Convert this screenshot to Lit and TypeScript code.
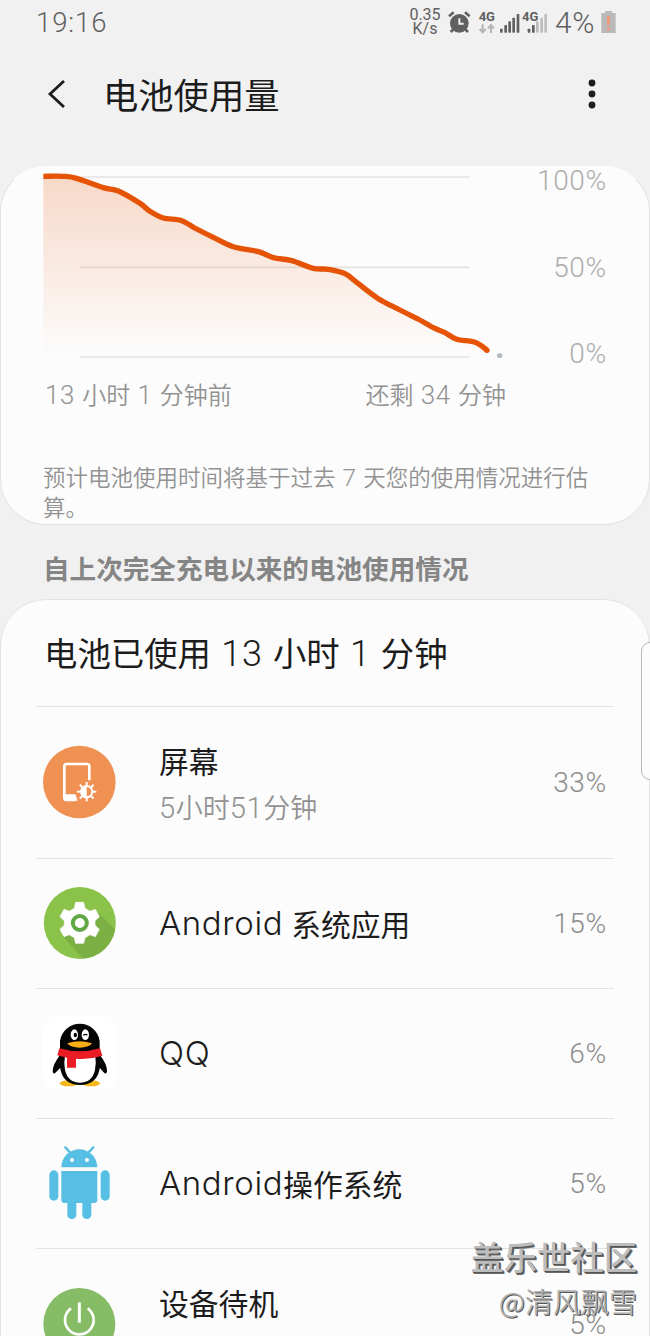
import { LitElement, html, css, svg } from "lit";
import { customElement } from "lit/decorators.js";

type Point = [number, number];

const LEVELS: Point[] = [
  [130, 79], [190, 79], [230, 85], [310, 113], [355, 123], [420, 160], [450, 184], [490, 204],
  [545, 212], [590, 237], [640, 262], [700, 290], [775, 305], [820, 323], [875, 332],
  [940, 355], [985, 358], [1035, 371], [1075, 401], [1135, 446], [1200, 480], [1265, 513],
  [1300, 533], [1335, 548], [1370, 568], [1425, 577], [1462, 601],
];

/** Smooth path through the points (Catmull-Rom converted to cubic segments). */
function smooth(p: Point[]): string {
  let d = `M${p[0][0]} ${p[0][1]}`;
  for (let i = 0; i < p.length - 1; i++) {
    const a = p[Math.max(0, i - 1)], b = p[i], c = p[i + 1], e = p[Math.min(p.length - 1, i + 2)];
    d += `C${b[0] + (c[0] - a[0]) / 6} ${b[1] + (c[1] - a[1]) / 6} ${c[0] - (e[0] - b[0]) / 6} ${c[1] - (e[1] - b[1]) / 6} ${c[0]} ${c[1]}`;
  }
  return d;
}

const CURVE = smooth(LEVELS);

/** Sets numerals (with their spaces) apart from the Chinese text around them. */
const mixed = (text: string) =>
  text.split(/([ \d]+)/).filter(Boolean).map((t) => (/^[ \d]+$/.test(t) ? html`<span class="n">${t}</span>` : t));

const rays = (cx: number, cy: number, r1: number, r2: number) =>
  [0, 1, 2, 3, 4, 5, 6, 7].map((k) => {
    const a = (k * Math.PI) / 4;
    return svg`<line x1=${cx + r1 * Math.cos(a)} y1=${cy + r1 * Math.sin(a)} x2=${cx + r2 * Math.cos(a)} y2=${cy + r2 * Math.sin(a)}/>`;
  });

const screenIcon = html`<svg class="icon" viewBox="72 47 216 216">
  <circle cx="178" cy="155" r="109" fill="#ef9152"/>
  <path d="M208 150V108Q208 101 201 101H140Q133 101 133 108V202Q133 209 140 209H167" fill="none" stroke="#fff" stroke-width="8"/>
  <path d="M133 192H166L173 211H138Z" fill="#fff"/>
  <g stroke="#fff" stroke-width="6">${rays(200, 184, 19, 29)}</g>
  <circle cx="200" cy="184" r="17" fill="none" stroke="#fff" stroke-width="6"/>
  <path d="M200 167A17 17 0 0 0 200 201Z" fill="#fff"/>
</svg>`;

const gearIcon = html`<svg class="icon" viewBox="72 470 216 216">
  <defs><clipPath id="disc"><circle cx="179.500" cy="578" r="108"/></clipPath></defs>
  <circle cx="179.500" cy="578" r="108" fill="#8bc34a"/>
  <g clip-path="url(#disc)"><path d="M236 548L300 612V690H193L128 617Z" fill="#7cb045"/></g>
  <path d="M167 516H191L195 534Q203 538 210 543L226 537L238 559L225 571V585L238 597L226 619L210 613Q203 618 195 622L191 639H167L163 622Q155 618 148 613L132 619L120 597L133 585V571L120 559L132 537L148 543Q155 538 163 534Z" fill="#fff" stroke="#fff" stroke-width="2" stroke-linejoin="round"/>
  <circle cx="179.500" cy="578" r="21" fill="#fff" stroke="#5fa843" stroke-width="12"/>
</svg>`;

const qqIcon = html`<svg class="icon" viewBox="72 48 216 216">
  <rect x="68" y="46" width="222" height="218" rx="40" fill="#fff"/>
  <ellipse cx="146" cy="247" rx="27" ry="9" fill="#f5b81c"/>
  <ellipse cx="213" cy="247" rx="27" ry="9" fill="#f5b81c"/>
  <path d="M122 160Q98 190 98 212Q100 222 108 214L126 195ZM238 160Q262 190 261 212Q258 222 251 214L234 195Z" fill="#050505"/>
  <path d="M120 150V120A60 59 0 0 1 239 120V150Q246 180 238 208Q228 252 180 252Q132 252 122 208Q114 180 120 150Z" fill="#050505"/>
  <path d="M135 165H226Q229 187 225 207Q216 245 180 245Q144 245 135 207Q131 187 135 165Z" fill="#fff"/>
  <ellipse cx="163" cy="101" rx="11" ry="16" fill="#fff"/>
  <ellipse cx="196" cy="101" rx="11" ry="16" fill="#fff"/>
  <ellipse cx="166" cy="102" rx="5" ry="7" fill="#050505"/>
  <path d="M190 103Q196 97 202 103" fill="none" stroke="#050505" stroke-width="4"/>
  <path d="M142 127Q178 115 216 127Q206 140 179 140Q152 140 142 127Z" fill="#f8ae14"/>
  <path d="M118 142Q179 160 240 142L247 164Q206 177 168 173V200H141V170L112 163Z" fill="#eb1c23"/>
</svg>`;

const robotIcon = html`<svg class="icon" viewBox="72 441 216 216">
  <g fill="#57bfe3">
    <path d="M124 502A54 54 0 0 1 232 502Z"/>
    <path d="M124 513H232V600Q232 609 223 609H133Q124 609 124 600Z"/>
    <rect x="88" y="511" width="27" height="91" rx="13.500"/>
    <rect x="242" y="511" width="27" height="91" rx="13.500"/>
    <rect x="142" y="590" width="27" height="67" rx="13"/>
    <rect x="187" y="590" width="27" height="67" rx="13"/>
  </g>
  <path d="M136 442L150 457M220 442L206 457" stroke="#57bfe3" stroke-width="7" stroke-linecap="round"/>
  <circle cx="156" cy="480" r="6" fill="#fff"/><circle cx="201" cy="480" r="6" fill="#fff"/>
</svg>`;

const powerIcon = html`<svg class="icon" viewBox="132 172 216 216">
  <circle cx="238" cy="280" r="108" fill="#86bc66"/>
  <path d="M238 215V276" stroke="#fff" stroke-width="9"/>
  <path d="M213 233A43 43 0 1 0 263 233" fill="none" stroke="#fff" stroke-width="8"/>
</svg>`;

const ROWS = [
  { icon: screenIcon, latin: "", cjk: "屏幕", sub: "5小时51分钟", tall: true, pct: "33%" },
  { icon: gearIcon, latin: "Android", cjk: "系统应用", gap: true, pct: "15%" },
  { icon: qqIcon, latin: "QQ", cjk: "", pct: "6%" },
  { icon: robotIcon, latin: "Android", cjk: "操作系统", pct: "5%" },
  { icon: powerIcon, latin: "", cjk: "设备待机", tall: true, pct: "5%" },
];

@customElement("app-root")
export class AppRoot extends LitElement {
  static styles = css`
    :host {
      display: block; position: relative; width: 650px; height: 1336px; overflow: hidden;
      background: #f1f1f1; color: #1c1c1c; white-space: nowrap;
      font-family: "Noto Sans CJK SC", sans-serif; font-weight: 350;
    }
    * { box-sizing: border-box; }
    svg { display: block; overflow: visible; }
    .c { font-weight: 400; }
    .n { font-family: Roboto, sans-serif; font-weight: 300; font-size: 1.08em; letter-spacing: .02em; word-spacing: .02em; line-height: 1; white-space: pre-wrap; }
    .status { display: flex; height: 44px; align-items: center; padding-left: 36px; color: #606060; font-family: Roboto, sans-serif; font-weight: 300; }
    .clock { font-size: 27.5px; width: 371px; letter-spacing: .9px; }
    .speed { font-size: 16px; line-height: 14px; width: 36px; text-align: center; font-weight: 400; }
    .signals { width: 107px; height: 30px; margin-left: 2px; }
    .signals text { font: 700 39px Roboto, sans-serif; fill: #606060; }
    .level { font-size: 30px; width: 46px; margin-left: 3px; letter-spacing: .6px; }
    .header { display: flex; align-items: center; height: 122px; padding: 0 52px 22px 47px; }
    .title { flex: 1; margin: 0 0 0 37px; font-size: 35.3px; line-height: 50px; }
    .card { border: 1px solid #e3e3e3; background: #fcfcfc; border-radius: 46px; }
    .usage { height: 359px; border-top-color: #fcfcfc; }
    .graph { display: flex; height: 200px; }
    .plot { width: 516px; height: 200px; margin: -1px 0 0 -1px; }
    .scale { display: flex; flex-direction: column; justify-content: space-between; flex: 1; height: 207px; padding-right: 42px; text-align: right; color: #adadad; line-height: 34px; margin-top: -3px; }
    .scale, .pct { font-family: Roboto, sans-serif; font-weight: 300; font-size: 28px; letter-spacing: .7px; }
    .times { display: flex; justify-content: space-between; padding: 10px 143px 0 44px; line-height: 34px; height: 45px; font-size: 24px; color: #929292; }
    .note { padding: 50px 50px 0 42px; font-size: 22.5px; line-height: 29.5px; color: #929292; white-space: normal; word-break: break-all; }
    .section { height: 74px; padding: 25px 0 0 43px; font-size: 26.6px; line-height: 36px; color: #858585; font-weight: 700; }
    .list { height: 800px; padding: 0 35px; }
    .total { height: 107px; padding: 0 0 0 8px; line-height: 104px; font-size: 33.4px; border-bottom: 1px solid #e3e3e3; }
    .row { display: flex; align-items: center; height: 130px; border-bottom: 1px solid #e3e3e3; padding: 0 7px 0 8px; }
    .tall { height: 152px; }
    .icon { width: 72px; height: 72px; margin-bottom: 2px; }
    .info { flex: 1; margin-left: 43px; padding-bottom: 2px; }
    .tall .info { height: 90px; }
    .name { display: flex; align-items: center; font-size: 29.8px; line-height: 44px; }
    .latin { font-family: Inter, sans-serif; font-weight: 300; font-size: 33px; letter-spacing: .6px; }
    .gap { margin-left: 8px; }
    .sub { font-size: 27px; line-height: 49px; color: #929292; }
    .pct { color: #8c8c8c; }
    .handle { position: absolute; left: 641px; top: 642px; width: 20px; height: 138px; border: 1px solid #b5b5b5; border-radius: 9px; background: #fcfcfc; }
    .mark { position: absolute; right: 13px; top: 1234px; text-align: right; }
    .forum { font-size: 33.3px; line-height: 44px; font-weight: 500; color: #bdbdbd; text-shadow: 1px 1px 0 #555, 2px 2px 0 #6a6a6a; }
    .author { font-size: 28px; line-height: 47px; font-weight: 350; color: #b0b0b0; text-shadow: 1px 1px 0 #555; }
  `;

  private bars(xs: number[], y0: number, step: number, lit: number) {
    return xs.map((x, i) => svg`<rect x=${x} y=${y0 - step * i} width="8" height=${97 - y0 + step * i} rx="2" fill=${i < lit ? "#606060" : "#bcbcbc"}/>`);
  }

  render() {
    return html`
      <div class="status">
        <span class="clock">19:16</span>
        <span class="speed">0.35<br>K/s</span>
        <svg class="signals" viewBox="150 20 321 90">
          <circle cx="193" cy="69" r="28" fill="#606060"/>
          <path d="M162 48L176 36M224 48L210 36" stroke="#606060" stroke-width="8"/>
          <path d="M175 87L167 95M211 87L219 95" stroke="#606060" stroke-width="8"/>
          <path d="M193 54V70H206" fill="none" stroke="#f1f1f1" stroke-width="6"/>
          <text x="251" y="63">4G</text>
          <path d="M263 72V95M254 86L263 96L272 86M288 98V75M279 84L288 74L297 84" fill="none" stroke="#b5b5b5" stroke-width="6"/>
          ${this.bars([315, 328, 340, 352, 365], 85, 11, 5)}
          ${this.bars([398, 411, 423, 436, 448], 85, 11, 2)}
          <text x="381" y="63" stroke="#f1f1f1" stroke-width="5" paint-order="stroke">4G</text>
        </svg>
        <span class="level">4%</span>
        <svg width="15" height="22" viewBox="0 0 15 23"><path d="M4 0H11V2H15V23H0V2H4Z" fill="#b9b9b9"/><path d="M7.500 5V15M7.500 17V20" stroke="#f29a7c" stroke-width="3"/></svg>
      </div>
      <header class="header">
        <svg width="19" height="30" viewBox="0 0 19 30"><path d="M17 2L3 15L17 28" fill="none" stroke="#1c1c1c" stroke-width="2.800"/></svg>
        <h1 class="title c">电池使用量</h1>
        <svg width="12" height="30" viewBox="0 0 12 30"><g fill="#1c1c1c"><circle cx="6" cy="4" r="3.400"/><circle cx="6" cy="15" r="3.400"/><circle cx="6" cy="26" r="3.400"/></g></svg>
      </header>
      <section class="card usage">
        <div class="graph">
          <svg class="plot" viewBox="0 48 1548 600">
            <defs><linearGradient id="fade" x1="0" y1="79" x2="0" y2="620" gradientUnits="userSpaceOnUse"><stop offset="0" stop-color="#e85a10" stop-opacity=".22"/><stop offset="1" stop-color="#e85a10" stop-opacity="0"/></linearGradient></defs>
            <path d="M238 81H1408M238 352H1408M238 621H1408" stroke="#e3e3e3" stroke-width="5"/>
            <path d="${CURVE}L1462 620H130Z" fill="url(#fade)"/>
            <path d="${CURVE}" fill="none" stroke="#e55406" stroke-width="16"/>
            <circle cx="1461" cy="601" r="8" fill="#e55406"/>
            <ellipse cx="1499" cy="617" rx="8" ry="7" fill="#b4bbc0"/>
          </svg>
          <div class="scale"><span>100%</span><span>50%</span><span>0%</span></div>
        </div>
        <div class="times"><span>${mixed("13 小时 1 分钟前")}</span><span>${mixed("还剩 34 分钟")}</span></div>
        <div class="note">${mixed("预计电池使用时间将基于过去 7 天您的使用情况进行估算。")}</div>
      </section>
      <div class="section c">自上次完全充电以来的电池使用情况</div>
      <section class="card list">
        <div class="total c">${mixed("电池已使用 13 小时 1 分钟")}</div>
        ${ROWS.map((r) => html`
          <div class="row ${r.tall ? "tall" : ""}">
            ${r.icon}
            <div class="info">
              <div class="name">${r.latin ? html`<span class="latin">${r.latin}</span>` : ""}${r.cjk ? html`<span class="c ${r.gap ? "gap" : ""}">${r.cjk}</span>` : ""}</div>
              ${r.sub ? html`<div class="sub">${mixed(r.sub)}</div>` : ""}
            </div>
            <span class="pct">${r.pct}</span>
          </div>`)}
      </section>
      <div class="handle"></div>
      <div class="mark"><div class="forum">盖乐世社区</div><div class="author">@清风飘雪</div></div>
    `;
  }
}
